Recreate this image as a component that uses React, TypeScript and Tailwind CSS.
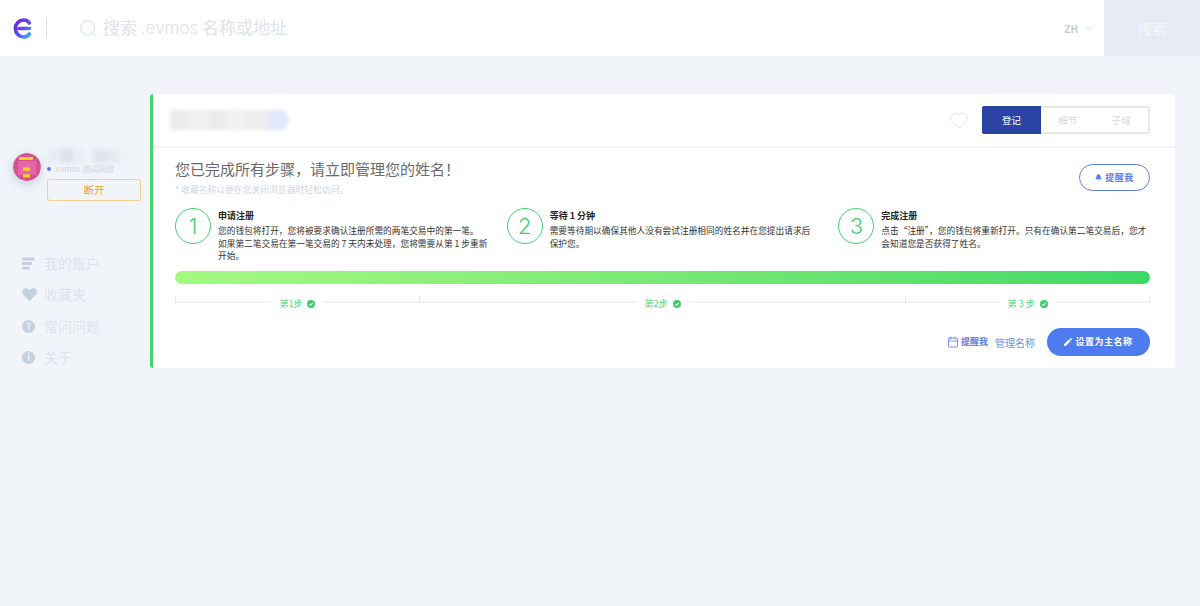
import { Bell, Calendar, ChevronDown, Heart, Search } from 'lucide-react';

const steps = [
  {
    n: '1',
    title: '申请注册',
    lines: ['您的钱包将打开，您将被要求确认注册所需的两笔交易中的第一笔。', '如果第二笔交易在第一笔交易的 7 天内未处理，您将需要从第 1 步重新', '开始。'],
  },
  {
    n: '2',
    title: '等待 1 分钟',
    lines: ['需要等待期以确保其他人没有尝试注册相同的姓名并在您提出请求后', '保护您。'],
  },
  {
    n: '3',
    title: '完成注册',
    lines: ['点击“注册”，您的钱包将重新打开。只有在确认第二笔交易后，您才', '会知道您是否获得了姓名。'],
  },
];

function Logo() {
  return (
    <svg width="19" height="21" viewBox="0 0 19 21" fill="none">
      <defs>
        <linearGradient id="logo" x1="0" y1="0" x2="1" y2="1">
          <stop offset="0" stopColor="#7a1fe0" />
          <stop offset="0.55" stopColor="#5a4cf0" />
          <stop offset="1" stopColor="#3fb6f5" />
        </linearGradient>
      </defs>
      <path
        d="M16.4 5C15.2 3 13 2 10.8 2 6 2 2.4 5.6 2.4 10.5S6 19 10.8 19c2.2 0 4.4-1 5.6-3M6 10.5H16.6"
        stroke="url(#logo)"
        strokeWidth="3.6"
        strokeLinecap="round"
      />
    </svg>
  );
}

function Avatar() {
  return (
    <svg width="28" height="28" viewBox="0 0 28 28" className="rounded-full shadow-[0_3px_10px_rgba(120,130,170,0.35)]">
      <circle cx="14" cy="14" r="14" fill="#d4528f" />
      <rect x="5" y="8" width="18" height="14" fill="#e566a8" />
      <rect x="6" y="4" width="14" height="3" fill="#f7d21e" />
      <rect x="10" y="14.5" width="7" height="3.2" fill="#f7d21e" />
      <rect x="10" y="21.3" width="7" height="3.2" fill="#f7d21e" />
    </svg>
  );
}

function BarsIcon() {
  return (
    <svg width="13" height="13" viewBox="0 0 13 13" fill="#c5d0df">
      <rect x="0" y="0.5" width="13" height="3" rx="1" />
      <rect x="0" y="5" width="10" height="3" rx="1" />
      <rect x="0" y="9.5" width="8" height="3" rx="1" />
    </svg>
  );
}

function HeartIcon() {
  return (
    <svg width="15" height="13" viewBox="0 0 24 21" fill="#c5d0df">
      <path d="M12 21 2.2 11.2C-.7 8.2-.7 4 2 1.7 4.6-.6 8.6-.2 12 3.4 15.4-.2 19.4-.6 22 1.7c2.7 2.3 2.7 6.5-.2 9.5Z" />
    </svg>
  );
}

function BadgeIcon({ glyph }: { glyph: string }) {
  return (
    <span className="flex h-[13px] w-[13px] items-center justify-center rounded-full bg-[#c5d0df] text-[9px] leading-none font-bold text-[#f1f5fa]">
      {glyph}
    </span>
  );
}

function CheckDot() {
  return (
    <svg width="8" height="8" viewBox="0 0 8 8">
      <circle cx="4" cy="4" r="4" fill="#3fce6a" />
      <path d="M2.2 4.1 3.5 5.3 5.8 2.9" stroke="#fff" strokeWidth="1.1" fill="none" />
    </svg>
  );
}

function PencilIcon() {
  return (
    <svg width="8" height="8" viewBox="0 0 8 8" fill="#fff">
      <path d="M0 8V6.2L4.8 1.4 6.6 3.2 1.8 8ZM5.4.8 6 .2a.7.7 0 0 1 1 0l.8.8a.7.7 0 0 1 0 1l-.6.6Z" />
    </svg>
  );
}

function NavItem({ icon, label }: { icon: React.ReactNode; label: string }) {
  return (
    <div className="flex h-[31.5px] items-center">
      <span className="flex w-[22px]">{icon}</span>
      <span className="text-[14px] text-[#dde3ec]">{label}</span>
    </div>
  );
}

function StepLabel({ label, flex }: { label: string; flex: string }) {
  return (
    <div className={`relative flex h-[7px] items-center justify-center border-l border-[#e4e7ea] ${flex}`}>
      <div className="absolute inset-x-0 top-[5px] h-[2px] bg-[#f1f2f3]" />
      <div className="relative top-[4px] flex items-center gap-[5px] bg-white px-[8px] text-[9px] leading-none text-[#55d67c]">
        {label}
        <CheckDot />
      </div>
    </div>
  );
}

function Smudge({ blocks, className }: { blocks: [number, string][]; className: string }) {
  return (
    <div className={`flex overflow-hidden blur-[2px] ${className}`}>
      {blocks.map(([w, c], i) => (
        <div key={i} className="h-full" style={{ width: w, background: c }} />
      ))}
    </div>
  );
}

export default function App() {
  return (
    <div className="h-[606px] w-[1200px] overflow-hidden bg-[#f1f5fa] font-['Noto_Sans_CJK_SC','Noto_Sans',sans-serif]">
      {/* top bar */}
      <header className="flex h-14 items-stretch bg-white">
        <div className="flex w-[47px] items-center justify-between pl-[13px]">
          <Logo />
          <span className="h-5 w-px bg-[#dfe3e8]" />
        </div>
        <div className="ml-[31px] flex flex-1 items-center gap-[4px]">
          <Search size={21} strokeWidth={1.4} className="text-[#dfe6f1]" />
          <span className="text-[17px] text-[#e0e3e9]">
            搜索 <span className="font-['Inter'] text-[17px] font-light">.evmos</span> 名称或地址
          </span>
        </div>
        <div className="mr-[10px] flex items-center gap-[5px] text-[10px] font-semibold text-[#c6cad2]">
          ZH
          <ChevronDown size={11} strokeWidth={1.6} />
        </div>
        <div className="flex w-[96px] items-center justify-center bg-[#e6ebf4] text-[14px] text-[#f6f8fb]">搜索</div>
      </header>

      <div className="flex pt-[38px]">
        {/* sidebar */}
        <aside className="w-[150px] shrink-0 pt-[59px] pl-[13px]">
          <div className="flex gap-[6px]">
            <Avatar />
            <div className="w-[94px]">
              <Smudge
                className="-mt-[4px] h-[14px] w-[84px]"
                blocks={[[14, '#e8ecf2'], [12, '#dde2ea'], [12, '#e9edf3'], [8, '#f0f4f9'], [14, '#e0e5ec'], [12, '#e6eaf0'], [12, '#eef1f6']]}
              />
              <div className="flex items-center gap-[3px] text-[8px] leading-[12px] text-[#ced5e0]">
                <span className="h-[3.5px] w-[3.5px] rounded-full bg-[#5b7fdc]" />
                .evmos 测试网络
              </div>
              <button className="mt-[2px] h-[22px] w-[94px] rounded-[3px] border border-[#f2cf8e] text-[10.5px] leading-none text-[#eba22b]">
                断开
              </button>
            </div>
          </div>
          <nav className="mt-[46px] pl-[9px]">
            <NavItem icon={<BarsIcon />} label="我的账户" />
            <NavItem icon={<HeartIcon />} label="收藏夹" />
            <NavItem icon={<BadgeIcon glyph="?" />} label="常问问题" />
            <NavItem icon={<BadgeIcon glyph="i" />} label="关于" />
          </nav>
        </aside>

        {/* name card */}
        <main className="h-[274px] w-[1025px] overflow-hidden rounded-[3px] border-l-[3px] border-[#3fd968] bg-white">
          <div className="flex h-[54px] items-center border-b-2 border-[#f3f4f6] pr-[25px] pl-[17px]">
            <Smudge
              className="h-[20px] w-[119px] rounded-r-full"
              blocks={[[20, '#ececec'], [20, '#f0f0f0'], [16, '#ebebeb'], [18, '#f1f1f0'], [22, '#ededee'], [23, '#e2e8fb']]}
            />
            <Heart size={20} strokeWidth={1.1} className="mr-[13px] ml-auto text-[#e0e2e6]" />
            <div className="flex h-[28px] w-[168px] text-[9.5px]">
              <div className="flex w-[59px] items-center justify-center rounded-l-[2px] bg-[#2a44a6] text-white">登记</div>
              <div className="flex flex-1 rounded-r-[2px] border-2 border-l-0 border-[#e8e9eb] text-[#d5d8dd]">
                <div className="flex flex-1 items-center justify-center">细节</div>
                <div className="flex flex-1 items-center justify-center">子域</div>
              </div>
            </div>
          </div>

          <div className="pt-[10px] pr-[25px] pl-[22px]">
            <div className="flex justify-between">
              <div>
                <h1 className="text-[15px] leading-[22px] font-normal text-[#6a6a6a]">您已完成所有步骤，请立即管理您的姓名！</h1>
                <p className="mt-[3px] text-[8.8px] leading-[14px] text-[#cfd5e0]">* 收藏名称以便在您关闭浏览器时轻松访问。</p>
              </div>
              <button className="mt-[6px] flex h-[27px] w-[71px] items-center justify-center gap-[3px] rounded-full border-[1.5px] border-[#5a7eea] text-[9px] font-bold tracking-[0.5px] text-[#5a7eea]">
                <Bell size={7} fill="currentColor" />
                提醒我
              </button>
            </div>

            <div className="mt-[11px] grid grid-cols-3 gap-5">
              {steps.map((s) => (
                <div key={s.n} className="flex items-start">
                  <div className="flex h-9 w-9 shrink-0 items-center justify-center rounded-full border border-[#3fd070] font-['Inter'] text-[22px] font-light text-[#3fd070]">
                    {s.n}
                  </div>
                  <div className="ml-[7px] flex-1 pt-px">
                    <div className="text-[9px] leading-[13px] font-bold text-[#222]">{s.title}</div>
                    <p className="mt-[3px] text-[8.7px] leading-[12.5px] whitespace-nowrap text-[#333]">
                      {s.lines.map((line) => (
                        <span key={line} className="block">{line}</span>
                      ))}
                    </p>
                  </div>
                </div>
              ))}
            </div>

            <div className="mt-[8.5px] h-[13px] rounded-full bg-gradient-to-r from-[#a5f983] to-[#3cd966]" />

            <div className="mt-[12px] flex border-r border-[#e4e7ea]">
              <StepLabel label="第1步" flex="flex-1" />
              <StepLabel label="第2步" flex="flex-2" />
              <StepLabel label="第 3 步" flex="flex-1" />
            </div>

            <div className="mt-[25px] flex items-center justify-end">
              <Calendar size={12} strokeWidth={1.6} className="text-[#5a7eea]" />
              <span className="ml-[2px] text-[9px] font-bold text-[#5a7eea]">提醒我</span>
              <span className="ml-[7px] text-[10px] text-[#6f8eea]">管理名称</span>
              <button className="ml-[12px] flex h-[28px] w-[103px] items-center justify-center gap-[3px] rounded-full bg-[#4f7bf0] text-[9px] font-bold tracking-[0.5px] text-white">
                <PencilIcon />
                设置为主名称
              </button>
            </div>
          </div>
        </main>
      </div>
    </div>
  );
}
